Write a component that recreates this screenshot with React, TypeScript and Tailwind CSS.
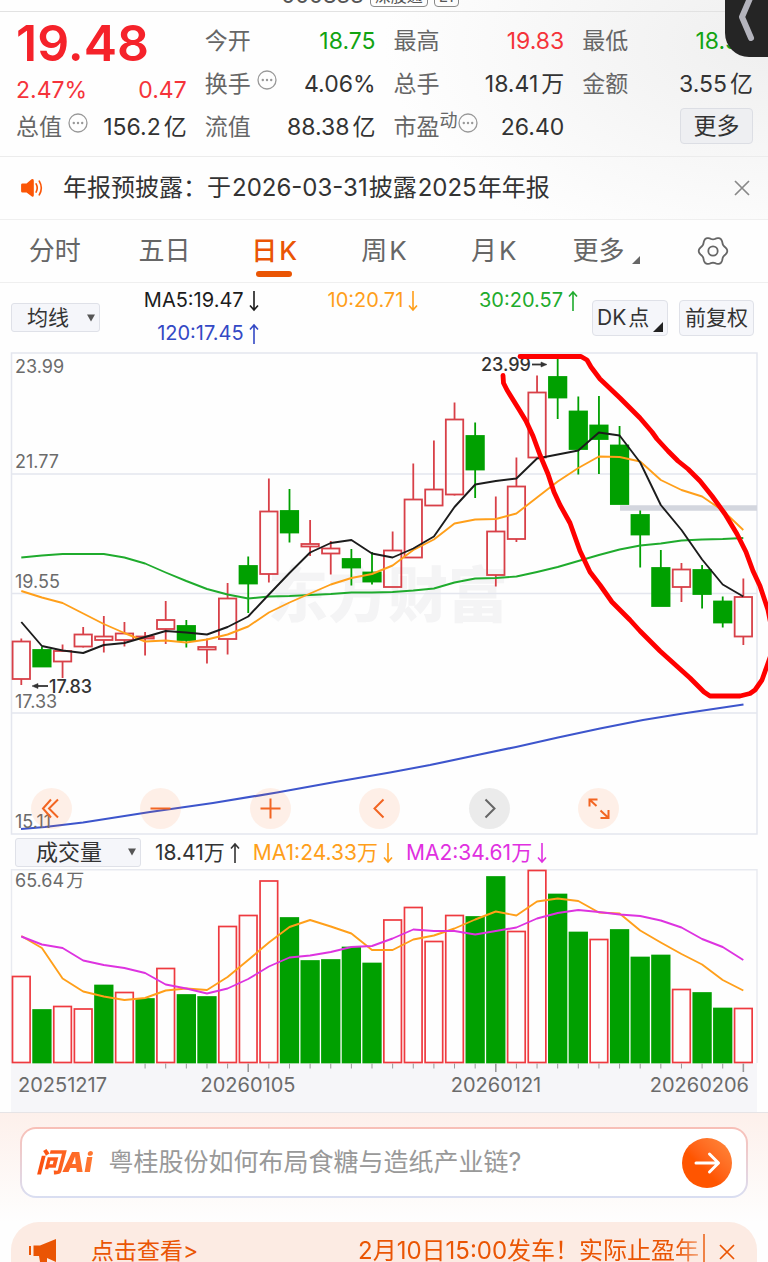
import React from "react";

type Candle = [high: number, top: number, bottom: number, low: number, up: 0 | 1];

const candles: Candle[] = [
  [638.5, 641.5, 679, 685, 1],
  [647, 650, 666.5, 666.5, 0],
  [644.5, 651, 661.5, 678, 1],
  [627, 634.5, 646.5, 647.5, 1],
  [616, 636.5, 640, 652.5, 1],
  [622, 633.5, 640, 646.5, 1],
  [632, 636.5, 638.5, 655.5, 1],
  [601, 620, 629, 644, 1],
  [620, 626, 640, 647.5, 0],
  [638.5, 647, 649.5, 663.5, 1],
  [583, 598.5, 639, 654.5, 1],
  [556.5, 566, 583.5, 613, 0],
  [478.5, 511.5, 574, 582.5, 1],
  [489, 511, 532.5, 542.5, 0],
  [520, 544, 546.5, 556, 1],
  [541, 548.5, 553.5, 574.5, 1],
  [549, 559, 567.5, 585.5, 0],
  [552, 572.5, 581.5, 584.5, 0],
  [531.5, 550.5, 587, 587, 1],
  [463.5, 499.5, 557.5, 557.5, 1],
  [440.5, 489.5, 505.5, 505.5, 1],
  [402.5, 419.5, 494.5, 495.5, 1],
  [422.5, 436, 469.5, 498, 0],
  [496.5, 531.5, 575, 586.5, 1],
  [457.5, 486.5, 539, 542, 1],
  [375.5, 392.5, 457.5, 457.5, 1],
  [358, 377, 397.5, 419, 0],
  [396.5, 411.5, 449, 474.5, 0],
  [396, 425.5, 439, 474, 0],
  [426, 445.5, 504, 504, 0],
  [510.5, 515, 534.5, 567.5, 0],
  [550, 568, 606, 606, 0],
  [563, 569.5, 587, 602, 1],
  [565, 570, 594, 608.5, 0],
  [596.5, 601.5, 622.5, 627.5, 0],
  [578.5, 597, 636.5, 645, 1],
];

const ma5 = [622, 646, 650.5, 653, 645, 643, 637, 631, 632.5, 634.5, 627, 616.5, 594.5, 573, 552.5, 543, 540, 553.5, 557.5, 548.5, 536.5, 507, 484.5, 481, 478.5, 458.5, 454.5, 450.5, 432.5, 435.5, 462.5, 505, 530, 559.5, 584.5, 596.5];
const ma10 = [591, 597.5, 603, 613.5, 624, 633, 641.5, 640.5, 642.5, 639.5, 634.5, 626.5, 612.5, 602.5, 593.5, 584.5, 578, 574, 565.5, 550, 539.5, 523.5, 519.5, 519, 513.5, 497.5, 481.5, 468, 456.5, 457, 461.5, 480, 490, 496.5, 510.5, 530];
const ma30 = [557.5, 555.5, 554, 554, 554, 557.5, 563.5, 572.5, 581, 589, 594.5, 598.5, 596.5, 596, 595, 594, 592.5, 592.5, 592, 590.5, 588.5, 582.5, 578.5, 578, 576.5, 572, 567, 561, 555, 549.5, 545.5, 543.5, 540.5, 539.5, 539, 538];

const volumes: [top: number, up: 0 | 1][] = [
  [976.5, 1], [1010, 0], [1006.5, 1], [1009, 1], [985.5, 0], [992.5, 1], [999, 0], [968.5, 1], [995, 0],
  [997, 0], [926.5, 1], [915.5, 1], [881, 1], [918, 0], [961, 0], [960, 0], [947.5, 0], [963.5, 0],
  [920, 1], [907.5, 1], [941.5, 1], [915.5, 1], [917, 0], [877, 0], [931.5, 1], [870.5, 1], [894.5, 0],
  [932.5, 0], [939.5, 1], [930, 0], [957.5, 0], [955.5, 0], [989.5, 1], [993, 0], [1008.5, 0], [1008.5, 1],
];
const volFast = [936, 948, 978.5, 991.5, 996.5, 1000, 998, 990.5, 988.5, 990, 977, 960, 942.5, 927, 920, 926.5, 933.5, 950, 950, 939.5, 935.5, 928.5, 919.5, 911.5, 915.5, 901.5, 898.5, 901, 912.5, 913.5, 930.5, 942.5, 954, 964.5, 980, 990.5];
const volSlow = [936.5, 944.5, 948, 960.5, 965, 968, 973, 984.5, 988.5, 993.5, 988.5, 979, 966.5, 957.5, 955.5, 952, 947, 946, 938.5, 929.5, 931, 931, 934.5, 931, 927.5, 918.5, 913, 910, 912, 914.5, 916, 920.5, 927.5, 939, 947, 960];

const xAt = (i: number) => 21.3 + i * 20.63;
const line = (ys: number[]) => ys.map((y, i) => `${xAt(i).toFixed(1)},${y}`).join(" ");

const gearPath =
  Array.from({ length: 72 }, (_, i) => {
    const a = (i * Math.PI) / 36;
    const r = 13 + 1.3 * Math.cos(6 * a);
    return `${i ? "L" : "M"}${(16 + r * Math.cos(a)).toFixed(2)} ${(16 + r * Math.sin(a)).toFixed(2)}`;
  }).join("") + "Z";

function Arrow({ up }: { up?: boolean }) {
  return (
    <svg viewBox="0 0 12 22" className="h-[22px] w-3 shrink-0" fill="none" stroke="currentColor" strokeWidth="1.6">
      <path d={up ? "M6 21V2M2 6.5L6 2L10 6.5" : "M6 1V20M2 15.5L6 20L10 15.5"} />
    </svg>
  );
}

function Dots() {
  return (
    <svg viewBox="0 0 20 20" className="mb-2 h-5 w-5 shrink-0 text-[#999]" fill="none" stroke="currentColor">
      <circle cx="10" cy="10" r="9" strokeWidth="1.3" />
      <g fill="currentColor" stroke="none">
        <circle cx="5.8" cy="10" r="1.2" />
        <circle cx="10" cy="10" r="1.2" />
        <circle cx="14.2" cy="10" r="1.2" />
      </g>
    </svg>
  );
}

type StatProps = { label: string; value: string; unit?: string; tone?: string; info?: boolean; sup?: string };

function Stat({ label, value, unit, tone = "text-[#333]", info, sup }: StatProps) {
  return (
    <div className="flex h-[43px] items-center justify-between whitespace-nowrap">
      <dt className={`flex items-center text-[#666] ${sup ? "gap-0" : "gap-1.5"}`}>
        {label}
        {sup && <span className="mb-3 text-[18px] leading-5">{sup}</span>}
        {info && <Dots />}
      </dt>
      <dd className={`flex gap-[3px] ${tone}`}>
        {value}
        {unit && <span>{unit}</span>}
      </dd>
    </div>
  );
}

function Select({ label, value, box, text }: { label: string; value: string; box: string; text: string }) {
  return (
    <div className={`relative shrink-0 ${box}`}>
      <select
        aria-label={label}
        className={`block h-full w-full appearance-none rounded-[3px] border border-[#dfe1e8] bg-[#f5f6fa] text-[#333] outline-none ${text}`}
      >
        <option>{value}</option>
      </select>
      <svg viewBox="0 0 8 8" className="pointer-events-none absolute top-1/2 right-[5px] h-2 w-2 -translate-y-1/2" fill="#555">
        <path d="M0 .5H8L4 7.5Z" />
      </svg>
    </div>
  );
}

const tabs = ["分时", "五日", "日K", "周K", "月K", "更多"];

const tools: { name: string; d: string; muted?: boolean }[] = [
  { name: "最早", d: "M20 11.5L12 20.5L20 29.5M27 11.5L18 20.5L27 29.5" },
  { name: "缩小", d: "M10.5 20.5H30.5" },
  { name: "放大", d: "M10.5 20.5H30.5M20.5 10.5V30.5" },
  { name: "向左", d: "M24.5 11.5L15.5 20.5L24.5 29.5" },
  { name: "向右", d: "M16.5 11.5L25.5 20.5L16.5 29.5", muted: true },
  { name: "全屏", d: "M11.5 18.5V11.5H19.5M11.5 11.5L18.5 18M22.5 30H30.5V22M30.5 30L22.5 22.5" },
];

function PriceChart() {
  return (
    <div className="relative">
      <svg viewBox="0 352 768 483" className="block w-full" role="img" aria-label="日K线图">
        <text x="268" y="617" fontSize="60" fontWeight="900" fill="#f4f4f5">东方财富</text>
        <g stroke="#e4e6ee" strokeWidth="1.5" fill="none">
          <path d="M11.5 353H757V834H11.5Z" />
          <path d="M11 474H757M11 593.5H757M11 713H757" />
        </g>
        <path d="M620 508H757" stroke="#d3d6de" strokeWidth="5.5" />
        {candles.map(([high, top, bottom, low, up], i) => {
          const x = xAt(i);
          const color = up ? "#d84048" : "#00a000";
          return (
            <g key={i} stroke={color} strokeWidth="1.8">
              <path d={`M${x} ${high}V${top}M${x} ${bottom}V${low}`} />
              <rect x={x - 8.7} y={top} width="17.4" height={bottom - top} fill={up ? "none" : color} />
            </g>
          );
        })}
        <g fill="none" strokeWidth="1.9" strokeLinejoin="round">
          <polyline points={line(ma30)} stroke="#1fab2d" />
          <polyline points={line(ma10)} stroke="#ff9f1a" />
          <polyline points={line(ma5)} stroke="#1c1c1c" />
          <polyline
            stroke="#3d55cc"
            strokeWidth="2.2"
            points="21,829 45,827 83,822.5 150,812 213,803 277,792.5 335,782 390,772.5 430,765 475,755.5 516,747 558,737.5 600,728.5 643,720 683,713.5 743.5,704.5"
          />
        </g>
        <g fontSize="18" fill="#6b6b6b">
          <text x="15" y="373">23.99</text>
          <text x="15" y="468">21.77</text>
          <text x="15" y="588">19.55</text>
          <text x="15" y="708">17.33</text>
          <text x="15" y="828">15.11</text>
        </g>
        <g fontSize="18" fontWeight="500" fill="#333">
          <text x="49" y="693">17.83</text>
          <text x="481" y="371">23.99</text>
        </g>
        <g stroke="#333" strokeWidth="1.8" fill="#333">
          <path d="M48 686H36" />
          <path d="M32 686L38 683.5V688.5Z" strokeWidth=".5" />
          <path d="M532 364.5H544" />
          <path d="M547 364.5L541 362V367Z" strokeWidth=".5" />
        </g>
        <path
          fill="none"
          stroke="#ff0000"
          strokeWidth="4.8"
          strokeLinecap="round"
          strokeLinejoin="round"
          d="M520 356.5H581L587 360L591 367L600 379L620 398L640 418L652 432L657 439L668 451L678 461L688 469L700 481L712 496L725 514L737 534L746 552L753 571L760 586L768 610L772 630L772 652L767 666L762 680L755 690L750 693.5L740 696H710L704 692L690 678L680 669L660 651L640 631L630 620L612 602L600 585L590 572L580 551L570 523L560 505L554 492L548 474L540 455L533 436L526 421L520 411L507 390L503.5 383L503 375.5"
        />
      </svg>
      <div className="absolute right-[19.4%] bottom-1.5 left-[4%] flex justify-between">
        {tools.map((t) => (
          <button
            key={t.name}
            type="button"
            aria-label={t.name}
            className={t.muted ? "rounded-full bg-[#e9e9e9]/90 text-[#666]" : "rounded-full bg-[#ff6a1a]/10 text-[#f26522]"}
          >
            <svg viewBox="0 0 41 41" className="h-[41px] w-[41px]" fill="none" stroke="currentColor" strokeWidth="2">
              <path d={t.d} />
            </svg>
          </button>
        ))}
      </div>
    </div>
  );
}

function VolumeChart() {
  return (
    <svg viewBox="0 869 768 243" className="block w-full" role="img" aria-label="成交量图">
      <rect x="11" y="1063" width="746" height="49" fill="#f6f6f9" />
      <path d="M11.5 1063V869.7H757V1063" fill="none" stroke="#e8eaf0" strokeWidth="1.4" />
      {volumes.map(([top, up], i) => (
        <rect
          key={i}
          x={xAt(i) - 8.8}
          y={top}
          width="17.6"
          height={1062.5 - top}
          fill={up ? "#fefefe" : "#00a000"}
          stroke={up ? "#ee3a3f" : "#00a000"}
          strokeWidth="1.7"
        />
      ))}
      {volumes.map((_, i) =>
        i < 6 ? null : (
          <path key={i} d={`M${xAt(i)} 1063.5V${i % 12 === 11 ? 1072 : 1068.5}`} stroke="#999" strokeWidth={i % 12 === 11 ? 1.6 : 1} />
        ),
      )}
      <g fill="none" strokeWidth="1.9" strokeLinejoin="round">
        <polyline points={line(volFast)} stroke="#ff9f1a" />
        <polyline points={line(volSlow)} stroke="#dd33e0" />
      </g>
      <text x="15" y="887" fontSize="18" fill="#6b6b6b">65.64<tspan dx="2">万</tspan></text>
      <g fontSize="20" fill="#6b6b6b">
        <text x="18" y="1092">20251217</text>
        <text x="248" y="1092" textAnchor="middle">20260105</text>
        <text x="496" y="1092" textAnchor="middle">20260121</text>
        <text x="749" y="1092" textAnchor="end">20260206</text>
      </g>
    </svg>
  );
}

export default function App() {
  return (
    <main className="relative w-full overflow-hidden bg-[#fefefe] font-['Inter','Noto_Sans_CJK_SC',sans-serif] text-[#333]">
      <div className="bg-[radial-gradient(ellipse_50%_100%_at_100%_20%,#efefef,#fefefe)]">
        <div className="flex h-3 items-end justify-center gap-1.5 overflow-hidden border-b border-[#e2e2e2] pr-7 text-[#555]">
          <span className="mb-1 text-[22px] leading-6">000833</span>
          <span className="mb-1 rounded border border-[#888] px-1 text-[16px] leading-5">深股通</span>
          <span className="mb-1 rounded border border-[#888] px-1 text-[16px] leading-5">L1</span>
        </div>

        <dl className="grid h-[145px] grid-cols-4 gap-x-[18px] border-b border-[#ececec] pt-[7px] pr-[15px] pl-4 text-[23px] leading-8">
          <div>
            <dd className="flex h-12 items-center text-[50px] font-semibold text-[#f5222a]">19.48</dd>
            <dd className="flex h-[46px] items-center justify-between text-[#f5333a]">
              <span>2.47%</span>
              <span>0.47</span>
            </dd>
            <div className="-mt-2">
              <Stat label="总值" value="156.2" unit="亿" info />
            </div>
          </div>
          <div>
            <Stat label="今开" value="18.75" tone="text-[#12a312]" />
            <Stat label="换手" value="4.06%" info />
            <Stat label="流值" value="88.38" unit="亿" />
          </div>
          <div>
            <Stat label="最高" value="19.83" tone="text-[#f5333a]" />
            <Stat label="总手" value="18.41" unit="万" />
            <Stat label="市盈" sup="动" value="26.40" info />
          </div>
          <div>
            <Stat label="最低" value="18.58" tone="text-[#12a312]" />
            <Stat label="金额" value="3.55" unit="亿" />
            <div className="flex h-[41px] items-center justify-end">
              <button type="button" className="h-9 w-[73px] rounded border border-[#dcdee4] bg-[#eeeff2] text-[23px]">更多</button>
            </div>
          </div>
        </dl>

        <div className="flex h-[63px] items-center border-b border-[#efefef] pr-[18px] pl-5">
          <svg viewBox="0 0 24 22" className="h-5 w-6 shrink-0 text-[#fb5607]" fill="currentColor">
            <path d="M1.5 6H6L11.5 1.5Q14 .2 14 3V19Q14 21.5 11.5 20L6 16H1.5Q0 16 0 14.5V7.5Q0 6 1.5 6Z" />
            <path d="M16.5 6.5Q19 11 16.5 15.5M20 3.5Q24.5 11 20 18.5" fill="none" stroke="currentColor" strokeWidth="1.8" strokeLinecap="round" />
          </svg>
          <p className="ml-[19px] flex-1 truncate text-[24px] leading-8">
            年报预披露：于<span className="mx-px">2026-03-31</span>披露<span className="mx-px">2025</span>年年报
          </p>
          <button type="button" aria-label="关闭公告" className="text-[#888]">
            <svg viewBox="0 0 16 16" className="h-4 w-4" fill="none" stroke="currentColor" strokeWidth="1.7">
              <path d="M1 1L15 15M15 1L1 15" />
            </svg>
          </button>
        </div>
      </div>

      <nav className="grid h-[63px] grid-cols-7 border-b border-[#efefef] text-[26px] text-[#666]">
        {tabs.map((t) => (
          <button
            key={t}
            type="button"
            className={`relative flex items-center justify-center pb-0.5 ${t === "日K" ? "font-medium text-[#ea5504]" : ""}`}
          >
            {t.endsWith("K") ? (
              <span className="flex gap-0.5">
                {t[0]}
                <span>K</span>
              </span>
            ) : (
              t
            )}
            {t === "更多" && (
              <svg viewBox="0 0 8 8" className="mt-5 -mr-1.5 ml-2 h-2 w-2" fill="currentColor">
                <path d="M8 0V8H0Z" />
              </svg>
            )}
            {t === "日K" && <span className="absolute bottom-[5px] h-1.5 w-9 rounded-full bg-[#ea5504]" />}
          </button>
        ))}
        <button type="button" aria-label="设置" className="flex items-center justify-center">
          <svg viewBox="0 0 32 32" className="h-8 w-8" fill="none" stroke="currentColor" strokeWidth="1.8">
            <path d={gearPath} />
            <circle cx="16" cy="16" r="4.7" />
          </svg>
        </button>
      </nav>

      <div className="flex h-[69px] items-start pt-[5px] pr-3.5 pl-[11px]">
        <Select label="均线类型" value="均线" box="mt-[15px] h-[29px] w-[89px]" text="pl-[15px] text-[21px] leading-6" />
        <div className="-mt-1 mr-[13px] grid flex-1 grid-cols-3 text-[20px] leading-[33px] whitespace-nowrap">
          <span className="flex items-center justify-end gap-1 text-[#1c1c1c]">MA5:19.47<Arrow /></span>
          <span className="flex items-center justify-end gap-1 text-[#ff9f1a]">10:20.71<Arrow /></span>
          <span className="flex items-center justify-end gap-1 text-[#1fab2d]">30:20.57<Arrow up /></span>
          <span className="flex items-center justify-end gap-1 text-[#3449c5]">120:17.45<Arrow up /></span>
        </div>
        <div className="mt-3 flex gap-[11px] text-[21px]">
          <button type="button" className="relative flex h-9 w-[76px] items-center gap-0.5 rounded border border-[#dfe1e8] bg-[#f5f6fa] pl-1">
            DK<span>点</span>
            <svg viewBox="0 0 10 10" className="absolute right-1 bottom-[3px] h-2.5 w-2.5" fill="#222">
              <path d="M10 0V10H0Z" />
            </svg>
          </button>
          <button type="button" className="h-9 w-[75px] rounded border border-[#dfe1e8] bg-[#f5f6fa] whitespace-nowrap">前复权</button>
        </div>
      </div>

      <PriceChart />

      <div className="flex h-[34px] items-center gap-3 pt-0.5 pl-[15px] text-[21px] whitespace-nowrap">
        <Select label="副图指标" value="成交量" box="mb-0.5 mr-0.5 h-[29px] w-[126px]" text="pl-5 text-[22px] leading-6" />
        <span className="flex items-center gap-1">18.41万<Arrow up /></span>
        <span className="flex items-center gap-1 text-[#ff9f1a]">MA1:24.33万<Arrow /></span>
        <span className="flex items-center gap-1 text-[#e030e0]">MA2:34.61万<Arrow /></span>
      </div>

      <VolumeChart />

      <section className="border-t border-[#e6e4e6] bg-linear-to-b from-[#fdf0eb] to-[#fefefe] px-5 pt-3.5 pb-6">
        <form className="rounded-2xl bg-linear-to-b from-[#f8bfb6] to-[#d9def2] p-0.5" onSubmit={(e) => e.preventDefault()}>
          <div className="flex h-[67px] items-center rounded-[14px] bg-white px-3.5">
            <span className="bg-linear-to-r from-[#fb4c0a] to-[#ff7a33] bg-clip-text pr-1 text-[27px] leading-9 font-black text-transparent italic">问Ai</span>
            <input
              aria-label="问AI"
              placeholder="粤桂股份如何布局食糖与造纸产业链?"
              className="ml-3 min-w-0 flex-1 bg-transparent text-[25px] outline-none placeholder:text-[#999]"
            />
            <button type="submit" aria-label="发送" className="rounded-full bg-linear-to-bl from-[#ff8a3c] to-[#ff5500] to-60%">
              <svg viewBox="0 0 50 50" className="h-[50px] w-[50px]" fill="none" stroke="#fff" strokeWidth="3" strokeLinecap="round" strokeLinejoin="round">
                <path d="M14 25H36M27.5 16L36.5 25L27.5 34" />
              </svg>
            </button>
          </div>
        </form>
      </section>

      <aside className="mx-[11px] flex h-10 items-start overflow-hidden rounded-t-[28px] bg-[#fcebe3] pt-3 pr-[22px] pl-[18px] text-[23px] leading-[34px] whitespace-nowrap text-[#ea5504]">
        <svg viewBox="0 0 28 26" className="mt-1 h-[26px] w-7 shrink-0" fill="currentColor">
          <path d="M0 8H2V17H0ZM4.5 7.5H11L27 1V24L18 20V24H11L10 18H4.5Z" />
        </svg>
        <a href="#details" className="ml-[34px]">点击查看&gt;</a>
        <p className="ml-auto w-[347px] overflow-hidden border-r-2 border-[#ea5504]/70 text-[24px] [mask-image:linear-gradient(90deg,#000_92%,#0007_98%,#000_99%)]">
          2月10日15:00发车！实际止盈年
        </p>
        <button type="button" aria-label="关闭广告" className="mt-2.5 ml-3.5">
          <svg viewBox="0 0 16 16" className="block h-4 w-4" fill="none" stroke="currentColor" strokeWidth="1.7">
            <path d="M1 1L15 15M15 1L1 15" />
          </svg>
        </button>
      </aside>

      <button type="button" aria-label="返回" className="absolute top-0 right-0 h-[57px] w-[43px] rounded-bl-[24px] bg-[#252525]">
        <svg viewBox="0 0 43 57" className="h-[57px] w-[43px]" fill="none" stroke="#b4b4bd" strokeWidth="6" strokeLinecap="round" strokeLinejoin="round">
          <path d="M26 -4L17 17L26 38" />
        </svg>
      </button>
    </main>
  );
}
